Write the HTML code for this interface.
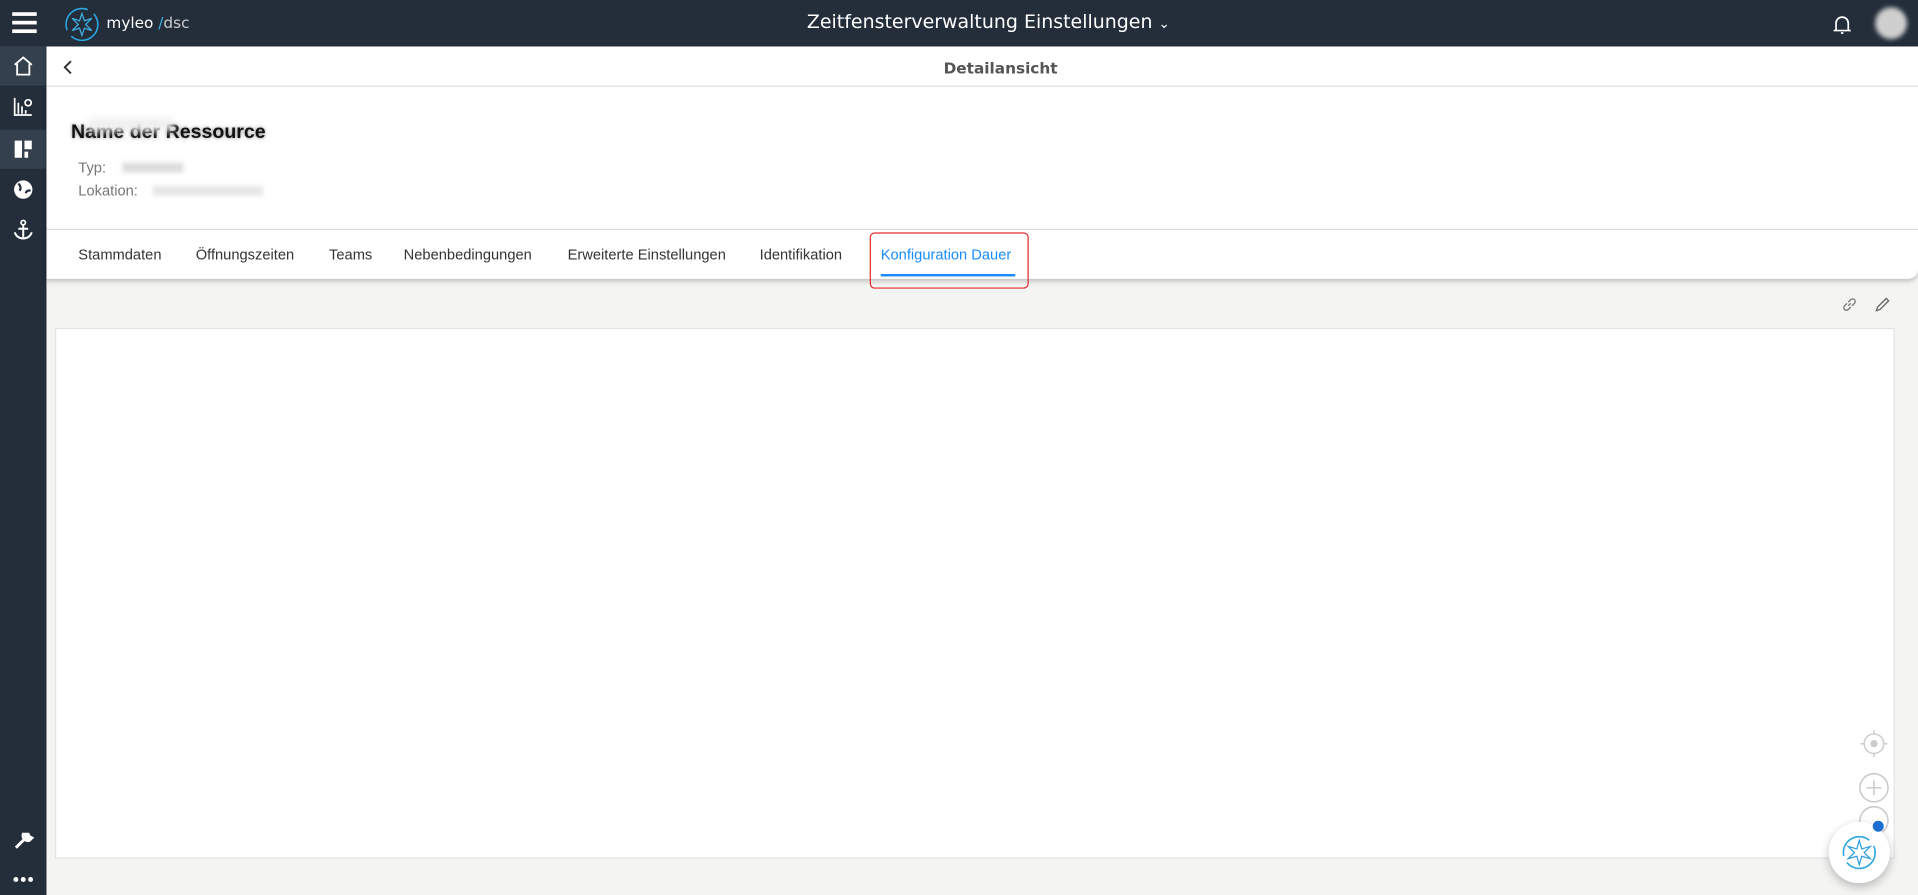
<!DOCTYPE html>
<html><head><meta charset="utf-8">
<style>
html,body{margin:0;padding:0;width:1918px;height:895px;overflow:hidden;background:#f4f4f2;}
#s{position:absolute;left:0;top:0;width:1568px;height:732px;transform:scale(1.22321);transform-origin:0 0;font-family:"Liberation Sans",sans-serif;}
.a{position:absolute;}
.hdr{left:0;top:0;width:1568px;height:38px;background:#232e3a;}
.side{left:0;top:38px;width:38px;height:694px;background:#232e3a;}
.tab{position:absolute;top:201px;font-size:12px;color:#333;}
</style></head><body><div id="s">
<div class="a hdr"></div>
<div class="a side"></div>
<div class="a" style="left:0;top:38px;width:38px;height:32px;background:#34404e"></div>
<div class="a" style="left:0;top:106px;width:38px;height:32px;background:#34404e"></div>
<div class="a" style="left:10px;top:10px;width:20px;height:2.5px;background:#fff;box-shadow:0 7px 0 #fff,0 14px 0 #fff"></div>
<svg class="a" style="left:52px;top:5px" width="30" height="30" viewBox="0 0 30 30"><circle cx="15" cy="15" r="13" fill="none" stroke="#2aa7e0" stroke-width="1.3" stroke-dasharray="30 6"/><path d="M15 6 L17 12 L23 10 L18 15 L23 20 L17 18 L15 24 L13 18 L7 20 L12 15 L7 10 L13 12Z" fill="none" stroke="#3fb2e6" stroke-width="1"/></svg>
<div class="a" style="left:87px;top:11px;font-size:12.5px;color:#fff;font-family:'DejaVu Sans',sans-serif">myleo<span style="color:#3fb2e6"> /</span><span style="color:#ccc">dsc</span></div>
<div class="a" style="left:566px;width:484px;top:9px;text-align:center;color:#fff;font-size:15.5px;font-family:'DejaVu Sans',sans-serif">Zeitfensterverwaltung Einstellungen <span style="font-size:11px">&#8964;</span></div>
<svg class="a" style="left:1496px;top:10px" width="20" height="20" viewBox="0 0 20 20"><path d="M5 15 V9 a5 5 0 0 1 10 0 V15 M3 15 H17 M9 17 H11" stroke="#fff" stroke-width="1.4" fill="none"/></svg>
<div class="a" style="left:1533px;top:6px;width:26px;height:26px;border-radius:50%;background:#cfcfcf;filter:blur(2px)"></div>
<svg class="a" style="left:10px;top:45px" width="18" height="18" viewBox="0 0 18 18"><path d="M2 8 L9 2 L16 8 M4 7 V16 H14 V7" stroke="#fff" stroke-width="1.5" fill="none"/></svg>
<svg class="a" style="left:10px;top:78px" width="18" height="18" viewBox="0 0 18 18"><path d="M2 2 V16 H16 M5 15 V6 M8 15 V9 M11 15 V12" stroke="#fff" stroke-width="1.4" fill="none"/><circle cx="13" cy="6" r="2.5" fill="none" stroke="#fff" stroke-width="1.4"/></svg>
<svg class="a" style="left:11px;top:114px" width="16" height="16" viewBox="0 0 16 16"><path d="M1 1H7V15H1Z M9 1H15V8H9Z M9 10H12V15H9Z" fill="#fff"/></svg>
<svg class="a" style="left:10px;top:146px" width="18" height="18" viewBox="0 0 18 18"><circle cx="9" cy="9" r="7.5" fill="#fff"/><path d="M5 4 Q8 7 6 10 M11 12 Q12 9 15 10" stroke="#232e3a" stroke-width="1.8" fill="none"/></svg>
<svg class="a" style="left:10px;top:179px" width="18" height="18" viewBox="0 0 18 18"><circle cx="9" cy="3" r="1.8" fill="none" stroke="#fff" stroke-width="1.4"/><path d="M9 5 V16 M5 8 H13 M2 11 Q4 16 9 16 Q14 16 16 11" stroke="#fff" stroke-width="1.6" fill="none"/></svg>
<svg class="a" style="left:10px;top:678px" width="18" height="18" viewBox="0 0 18 18"><path d="M3 15 L10 8 M9 4 a4 4 0 0 0 5 5 l2 -2 -2 -1 -1 -2 z" stroke="#fff" stroke-width="2.4" fill="#fff"/></svg>
<div class="a" style="left:11px;top:717px;width:4px;height:4px;border-radius:50%;background:#fff;box-shadow:6px 0 0 #fff,12px 0 0 #fff"></div>
<div class="a" style="left:38px;top:38px;width:1530px;height:190px;background:#fff;border-bottom-right-radius:8px;box-shadow:0 2px 4px rgba(0,0,0,.2)"></div>
<div class="a" style="left:38px;top:70px;width:1530px;height:1px;background:#e3e3e3"></div>
<div class="a" style="left:38px;top:187px;width:1530px;height:1px;background:#dcdcdc"></div>
<svg class="a" style="left:50px;top:48px" width="12" height="14" viewBox="0 0 12 14"><path d="M8 2 L3 7 L8 12" stroke="#333" stroke-width="1.6" fill="none"/></svg>
<div class="a" style="left:718px;width:200px;top:48px;text-align:center;font-size:12.5px;font-weight:bold;color:#555;font-family:'DejaVu Sans',sans-serif">Detailansicht</div>
<div class="a" style="left:58px;top:100px;font-size:16px;font-weight:bold;color:#111;text-shadow:0 0 3px rgba(0,0,0,.5)">Name der Ressource</div>
<div class="a" style="left:72px;top:97px;width:70px;height:10px;background:#eee;filter:blur(3px)"></div>
<div class="a" style="left:64px;top:130px;font-size:12px;color:#777">Typ:</div>
<div class="a" style="left:100px;top:133px;width:50px;height:8px;background:#ddd;filter:blur(2px)"></div>
<div class="a" style="left:64px;top:149px;font-size:12px;color:#777">Lokation:</div>
<div class="a" style="left:125px;top:152px;width:90px;height:8px;background:#e6e6e6;filter:blur(2px)"></div>
<div class="tab" style="left:64px">Stammdaten</div>
<div class="tab" style="left:160px">Öffnungszeiten</div>
<div class="tab" style="left:269px">Teams</div>
<div class="tab" style="left:330px">Nebenbedingungen</div>
<div class="tab" style="left:464px">Erweiterte Einstellungen</div>
<div class="tab" style="left:621px">Identifikation</div>
<div class="tab" style="left:720px;color:#1a8cff">Konfiguration Dauer</div>
<div class="a" style="left:720px;top:224px;width:110px;height:2px;background:#1a8cff"></div>
<div class="a" style="left:711px;top:190px;width:128px;height:44px;border:1.5px solid #e32b2b;border-radius:4px"></div>
<svg class="a" style="left:1505px;top:242px" width="14" height="14" viewBox="0 0 14 14"><path d="M6 8 L8 6 M5 6 L3 8 a2 2 0 0 0 3 3 L8 9 M9 8 L11 6 a2 2 0 0 0 -3 -3 L6 5" stroke="#777" stroke-width="1.1" fill="none"/></svg>
<svg class="a" style="left:1532px;top:242px" width="14" height="14" viewBox="0 0 14 14"><path d="M2 12 L3 9 L10 2 L12 4 L5 11 Z" stroke="#666" stroke-width="1.1" fill="none"/></svg>
<div class="a" style="left:45px;top:268px;width:1502px;height:432px;background:#fff;border:1px solid #e2e2e2"></div>
<svg class="a" style="left:1519px;top:595px" width="26" height="26" viewBox="0 0 26 26"><circle cx="13" cy="13" r="8" fill="none" stroke="#ccc" stroke-width="1.2"/><circle cx="13" cy="13" r="3" fill="#ccc"/><path d="M13 2V5 M13 21V24 M2 13H5 M21 13H24" stroke="#ccc" stroke-width="1.2"/></svg>
<svg class="a" style="left:1519px;top:631px" width="26" height="26" viewBox="0 0 26 26"><circle cx="13" cy="13" r="11.5" fill="none" stroke="#ccc" stroke-width="1.3"/><path d="M13 7V19 M7 13H19" stroke="#ccc" stroke-width="1.3"/></svg>
<svg class="a" style="left:1519px;top:658px" width="26" height="26" viewBox="0 0 26 26"><circle cx="13" cy="13" r="11.5" fill="none" stroke="#ccc" stroke-width="1.3"/></svg>
<div class="a" style="left:1495px;top:672px;width:50px;height:50px;border-radius:50%;background:#fff;box-shadow:0 3px 8px rgba(0,0,0,.25)"></div>
<svg class="a" style="left:1503px;top:680px" width="34" height="34" viewBox="0 0 34 34"><circle cx="17" cy="17" r="13" fill="none" stroke="#2aa7e0" stroke-width="1.3" stroke-dasharray="32 6"/><path d="M17 7 L19 14 L26 12 L21 17 L26 22 L19 20 L17 27 L15 20 L8 22 L13 17 L8 12 L15 14Z" fill="none" stroke="#2a9de0" stroke-width="1"/></svg>
<div class="a" style="left:1531px;top:671px;width:9px;height:9px;border-radius:50%;background:#1c6fd1"></div>
</div></body></html>
